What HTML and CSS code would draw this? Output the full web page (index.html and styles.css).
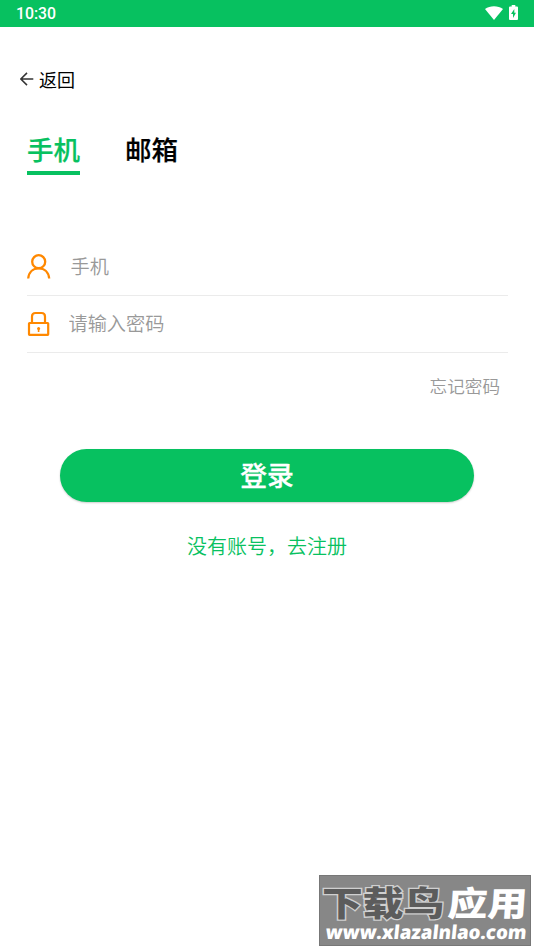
FILE: index.html
```html
<!DOCTYPE html>
<html lang="zh-CN">
<head>
  <meta charset="UTF-8" />
  <meta name="viewport" content="width=device-width, initial-scale=1.0" />
  <title>登录</title>
  <link rel="stylesheet" href="styles.css">
</head>
<body>
  <header class="status-bar">
    <span class="time">10:30</span>
    <div class="status-icons">
      <svg width="18" height="14" viewBox="0 0 18 14" fill="#fff"><path d="M0 3C5-.8 13-.8 18 3L9 14z"/></svg>
      <svg width="9" height="15" viewBox="0 0 9 15"><path fill="#fff" d="M2.7 0h3.600v1.500H8q1 0 1 1V14q0 1-1 1H1q-1 0-1-1V2.500q0-1 1-1h1.700z"/><path fill="#07c160" d="M5.300 4 2 9h2v4l3-5.200H5.300z"/></svg>
    </div>
  </header>

  <main>
    <a class="back">
      <svg width="14" height="14" viewBox="0 0 14 14" fill="none" stroke="#333" stroke-width="1.500"><path d="M13.300 7H1M7 .9.9 7 7 13.100"/></svg>
      <span>返回</span>
    </a>

    <nav class="tabs">
      <a class="tab active">手机</a>
      <a class="tab">邮箱</a>
    </nav>

    <form class="login-form">
      <label class="field">
        <svg width="24" height="26" viewBox="0 0 24 26" fill="none" stroke="#ff8800" stroke-width="2.300"><circle cx="11.700" cy="8.700" r="6.500"/><path d="M1.200 25.500C1.800 19 6 15.300 11.700 15.300S21.600 19 22.200 25.500"/></svg>
        <input class="phone" type="text" placeholder="手机">
      </label>
      <label class="field">
        <svg width="24" height="26" viewBox="0 0 24 26" fill="none" stroke="#ff8800" stroke-width="2.200"><path d="M5 12V5.500Q5 2 8.500 2h6q3.500 0 3.500 3.500V12"/><rect x="2" y="12" width="19.200" height="11.800" rx=".5"/><path stroke-width="1.600" d="M11.600 17v4"/><circle cx="11.600" cy="17.500" r="1.500" fill="#ff8800" stroke="none"/></svg>
        <input class="password" type="password" placeholder="请输入密码">
      </label>
      <a class="forgot">忘记密码</a>
      <button class="login-btn" type="button">登录</button>
      <a class="register">没有账号，去注册</a>
    </form>
  </main>

  <div class="watermark">
    <svg width="210" height="69" viewBox="0 0 210 69">
      <text class="mark-dark" transform="translate(2 40) scale(1.200 1)">下载鸟</text>
      <text class="mark-light" transform="translate(127 40) skewX(-4) scale(1.170 1)">应用</text>
      <text class="mark-url" x="0" y="0" textLength="201" lengthAdjust="spacingAndGlyphs" transform="translate(5 62.500) skewX(-6)">www.xlazalnlao.com</text>
    </svg>
  </div>
</body>
</html>
```

FILE: styles.css
```css
:root {
  --green: #07c160;
  --muted: #999;
  --line: #ebebeb;
  --font: Roboto, 'Noto Sans CJK SC', sans-serif;
}
* { box-sizing: border-box; margin: 0; padding: 0; font-family: var(--font); }
body { background: #fff; color: #000; height: 950px; overflow: hidden; }
svg { display: block; flex: none; }
.status-bar {
  height: 27px;
  padding: 0 16px;
  background: var(--green);
  color: #fff;
  display: flex;
  align-items: center;
  justify-content: space-between;
}
.time { font-size: 15.800px; font-weight: 500; line-height: 28px; }
.status-icons { display: flex; align-items: center; gap: 6px; height: 25px; margin-bottom: 2px; }
.back {
  display: flex;
  align-items: center;
  gap: 5px;
  height: 26px;
  margin: 39px 0 0 20px;
  font-size: 18px;
}
.back span { line-height: 26px; padding-top: 3px; }
.tabs { display: flex; gap: 45px; margin: 38px 0 0 27px; }
.tab {
  height: 45px;
  font-size: 26.500px;
  font-weight: 500;
  line-height: 41px;
  border-bottom: 4px solid transparent;
  -webkit-text-stroke: 0.2px;
}
.tab.active { color: var(--green); border-color: var(--green); }
.login-form { margin: 63px 26px 0 27px; display: flex; flex-direction: column; }
.field {
  display: flex;
  align-items: center;
  height: 57.500px;
  border-bottom: 1px solid var(--line);
}
.field input {
  flex: 1;
  height: 32px;
  padding-top: 2px;
  border: none;
  outline: none;
  background: none;
  font-size: 19.200px;
  font-weight: 350;
}
.field input::placeholder { color: var(--muted); }
.phone { margin-left: 19.500px; }
.password { margin-left: 17.500px; }
.forgot {
  align-self: flex-end;
  margin: 21px 8px 0 0;
  font-size: 17.600px;
  font-weight: 350;
  line-height: 26px;
  color: var(--muted);
}
.login-btn {
  height: 53px;
  margin: 49px 34px 0 33px;
  padding-top: 3px;
  border: none;
  border-radius: 27px;
  background: var(--green);
  box-shadow: 0 1px 2px rgba(0,0,0,0.2);
  color: #fff;
  font-size: 26.800px;
  font-weight: 500;
  line-height: 50px;
  -webkit-text-stroke: 0.3px;
}
.register {
  margin: 30px 1px 0 0;
  font-size: 20px;
  font-weight: 350;
  line-height: 30px;
  text-align: center;
  color: var(--green);
}
/* site mark over the bottom right corner */
.watermark {
  position: absolute;
  right: 3px;
  bottom: 4px;
  width: 212px;
  height: 71px;
  background: #878787;
  border: 1px solid #777;
}
.watermark text { font-family: 'Noto Sans CJK SC', sans-serif; font-weight: 900; paint-order: stroke; }
.mark-dark { font-size: 34px; fill: #5c5c5c; stroke: #d0d0d0; stroke-width: 2.500px; }
.mark-light { font-size: 34px; fill: #fff; }
.watermark .mark-url { font-family: 'Open Sans', sans-serif; font-size: 19px; font-weight: 800; fill: #fff; }
```
